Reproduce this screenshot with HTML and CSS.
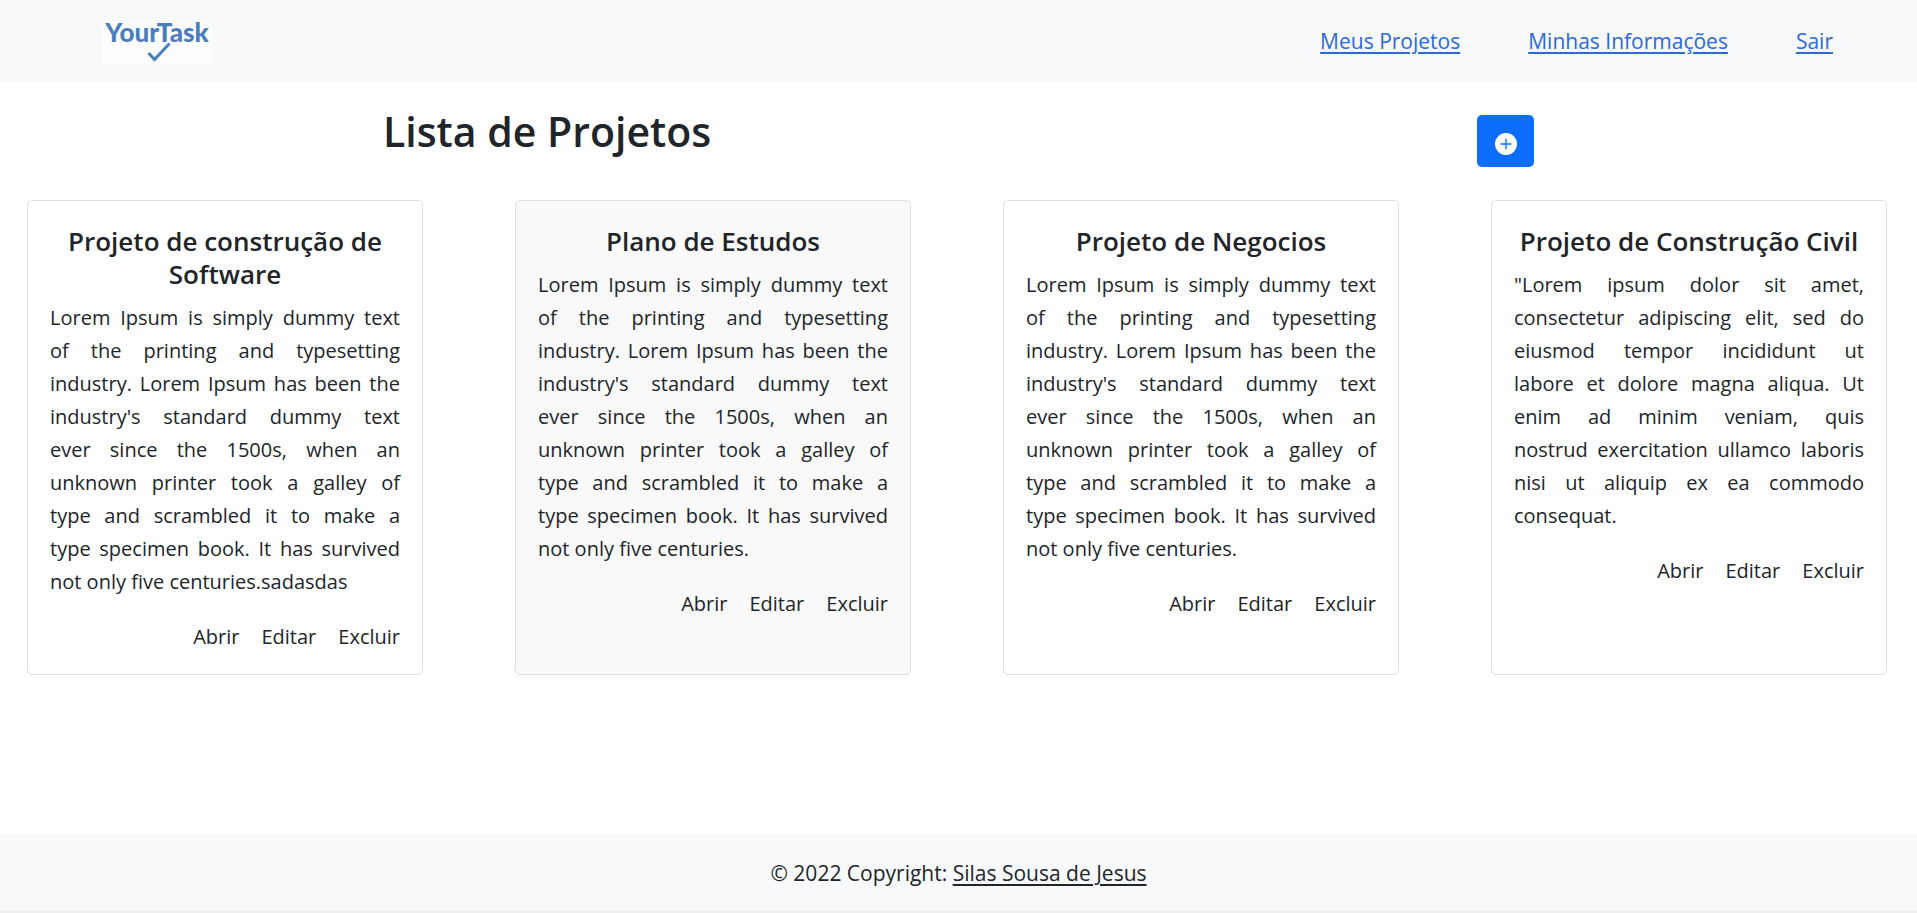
FILE: index.html
```html
<!DOCTYPE html>
<html lang="pt-BR">
<head>
<meta charset="utf-8">
<title>YourTask</title>
<link rel="stylesheet" href="styles.css">
</head>
<body>
<header class="navbar">
  <a class="brand" href="#" aria-label="YourTask">
    <span class="brand-name">YourTask</span>
    <svg class="brand-check" viewBox="0 0 24 20" aria-hidden="true"><path d="M1.5 11 7.500 17.500 22.500 1.500" fill="none" stroke="currentColor" stroke-width="3"/></svg>
  </a>
  <nav class="nav-links">
    <a href="#">Meus Projetos</a>
    <a href="#">Minhas Informações</a>
    <a href="#">Sair</a>
  </nav>
</header>
<main>
  <div class="page-head">
    <h1>Lista de Projetos</h1>
    <button class="add-button" type="button" aria-label="Adicionar projeto">
      <svg viewBox="0 0 16 16" aria-hidden="true"><path fill="currentColor" d="M16 8A8 8 0 1 1 0 8a8 8 0 0 1 16 0zM8.500 4.500a.5.5 0 0 0-1 0v3h-3a.5.5 0 0 0 0 1h3v3a.5.5 0 0 0 1 0v-3h3a.5.5 0 0 0 0-1h-3v-3z"/></svg>
    </button>
  </div>
  <section class="cards">
    <article class="card">
      <h2>Projeto de construção de Software</h2>
      <p>Lorem Ipsum is simply dummy text<br>of the printing and typesetting<br>industry. Lorem Ipsum has been the<br>industry's standard dummy text<br>ever since the 1500s, when an<br>unknown printer took a galley of<br>type and scrambled it to make a<br>type specimen book. It has survived <span class="last-line">not only five centuries.sadasdas</span></p>
      <div class="actions"><a href="#">Abrir</a><a href="#">Editar</a><a href="#">Excluir</a></div>
    </article>
    <article class="card card-active">
      <h2>Plano de Estudos</h2>
      <p>Lorem Ipsum is simply dummy text<br>of the printing and typesetting<br>industry. Lorem Ipsum has been the<br>industry's standard dummy text<br>ever since the 1500s, when an<br>unknown printer took a galley of<br>type and scrambled it to make a<br>type specimen book. It has survived <span class="last-line">not only five centuries.</span></p>
      <div class="actions"><a href="#">Abrir</a><a href="#">Editar</a><a href="#">Excluir</a></div>
    </article>
    <article class="card">
      <h2>Projeto de Negocios</h2>
      <p>Lorem Ipsum is simply dummy text<br>of the printing and typesetting<br>industry. Lorem Ipsum has been the<br>industry's standard dummy text<br>ever since the 1500s, when an<br>unknown printer took a galley of<br>type and scrambled it to make a<br>type specimen book. It has survived <span class="last-line">not only five centuries.</span></p>
      <div class="actions"><a href="#">Abrir</a><a href="#">Editar</a><a href="#">Excluir</a></div>
    </article>
    <article class="card">
      <h2>Projeto de Construção Civil</h2>
      <p>"Lorem ipsum dolor sit amet,<br>consectetur adipiscing elit, sed do<br>eiusmod tempor incididunt ut<br>labore et dolore magna aliqua. Ut<br>enim ad minim veniam, quis<br>nostrud exercitation ullamco laboris<br>nisi ut aliquip ex ea commodo <span class="last-line">consequat.</span></p>
      <div class="actions"><a href="#">Abrir</a><a href="#">Editar</a><a href="#">Excluir</a></div>
    </article>
  </section>
</main>
<footer class="footer">© 2022 Copyright: <a href="#">Silas Sousa de Jesus</a></footer>
</body>
</html>
```

FILE: styles.css
```css
* {
  box-sizing: border-box;
}

body {
  display: flex;
  flex-direction: column;
  min-height: 100vh;
  margin: 0;
  background: #fff;
  color: #212529;
  font: 21px/33px "Segoe UI", "Open Sans", sans-serif;
}

h1, h2, p {
  margin: 0;
}

.navbar {
  display: flex;
  align-items: center;
  justify-content: space-between;
  height: 82px;
  padding: 0 84px 0 102px;
  background: #f8f9fa;
}

.brand {
  display: flex;
  flex-direction: column;
  align-items: center;
  width: 110px;
  height: 42px;
  margin-top: 4px;
  background: #fdfdfd;
  color: #4a7ebf;
  text-decoration: none;
}

.brand-name {
  font: 900 26px/20px Lato, sans-serif;
}

.brand-check {
  width: 24px;
  height: 20px;
  margin-left: 4px;
}

.nav-links {
  display: flex;
  gap: 68px;
}

.nav-links a {
  color: #2a6adb;
}

a {
  text-decoration-thickness: 2px;
  text-underline-offset: 3px;
}

main {
  flex: 1;
}

.page-head {
  display: flex;
  justify-content: space-around;
  align-items: center;
  height: 118px;
}

h1 {
  margin-bottom: 20px;
  font-size: 41px;
  line-height: 53px;
  font-weight: 600;
}

.add-button {
  display: flex;
  justify-content: center;
  width: 57px;
  height: 52px;
  padding: 18px 0 0;
  border: 0;
  border-radius: 5px;
  background: #0d6efd;
  color: #fff;
}

.add-button svg {
  width: 22px;
  height: 22px;
}

.cards {
  display: grid;
  grid-template-columns: repeat(4, 1fr);
  gap: 92px;
  padding: 0 30px 0 27px;
}

.card {
  padding: 24px 22px 21px;
  border: 1px solid #dfdfdf;
  border-radius: 5px;
  font-size: 20px;
}

.card-active {
  background: #f9f9f9;
}

.card h2 {
  margin-bottom: 10px;
  font-size: 26px;
  line-height: 33px;
  font-weight: 600;
  text-align: center;
}

.card p {
  margin-bottom: 22px;
  text-align: justify;
  text-align-last: justify;
}

.last-line {
  display: block;
  text-align-last: left;
}

.actions {
  display: flex;
  justify-content: flex-end;
  gap: 22px;
}

.actions a {
  color: inherit;
  text-decoration: none;
}

.footer {
  padding: 23px 22px 21px;
  border-bottom: 2px solid #eee;
  background: #f8f9fa;
  text-align: center;
}

.footer a {
  color: inherit;
}
```
